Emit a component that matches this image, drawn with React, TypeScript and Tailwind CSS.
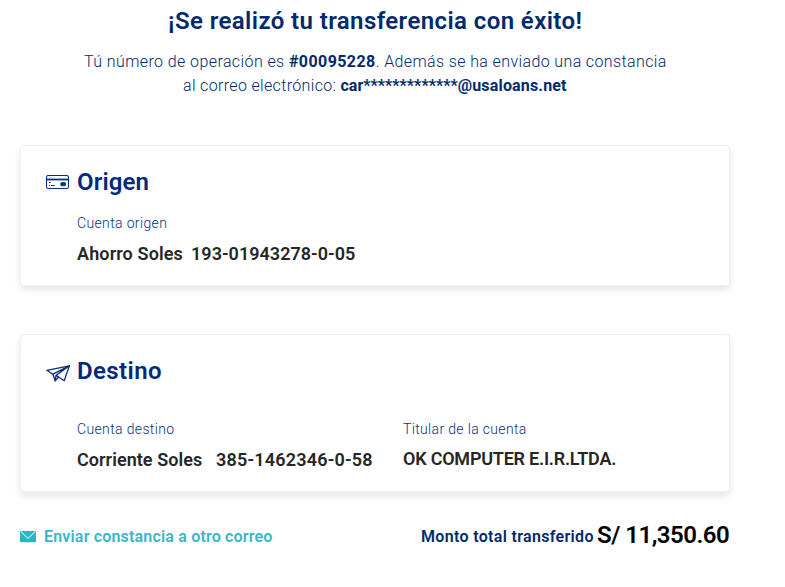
import type { ReactNode } from "react";

function CardIcon() {
  return (
    <svg className="mb-[2px] block" width="24" height="16" viewBox="0 0 24 16" fill="none" stroke="#0b2f7f">
      <rect x="0.5" y="0.5" width="22" height="13" rx="1.8" strokeWidth="1.1" />
      <path d="M0.5 4.5H22.5" strokeWidth="1.8" />
      <path d="M3 7.5H4.4M3 10.5H4M5 10.5H8.6" strokeWidth="1" />
      <rect x="14.8" y="7.6" width="4.8" height="3.2" rx="0.8" fill="#0b2f7f" strokeWidth="0.8" />
    </svg>
  );
}

function PlaneIcon() {
  return (
    <svg className="mt-[2px] block" width="25" height="17" viewBox="0 0 25 17" fill="none" stroke="#0b2f7f" strokeWidth="1.3" strokeLinejoin="round" strokeLinecap="round">
      <path d="M0.8 5.3L23.4 0.8L18.2 15.8L12.6 12L9.2 15.8L6.9 9.2Z" />
      <path d="M23.4 0.8L6.9 9.2M23.4 0.8L10 10.4L9.2 15.6M10 10.4L12.6 12" />
    </svg>
  );
}

function MailIcon() {
  return (
    <svg className="block" width="16" height="12" viewBox="0 0 16 12">
      <rect width="16" height="11.2" rx="1.2" fill="#2bb5c8" />
      <path d="M1 0.8L8 7.4L15 0.8" fill="none" stroke="#fff" strokeWidth="1" />
    </svg>
  );
}

function Panel({ icon, title, className, children }: { icon: ReactNode; title: ReactNode; className: string; children: ReactNode }) {
  return (
    <section className={`rounded-[4px] border border-[#eeeff1] bg-white pl-[25px] pt-5 shadow-[0_4px_7px_rgba(30,40,80,0.11)] ${className}`}>
      <header className="flex h-8 items-center">
        <div className="w-[31px] pt-[3px]">{icon}</div>
        <h2 className="text-[24px] font-semibold leading-8 text-[#002a7a]">{title}</h2>
      </header>
      <div className="pl-[31px]">{children}</div>
    </section>
  );
}

export default function App() {
  return (
    <main
      className="h-[587px] w-[785px] overflow-hidden whitespace-pre bg-white pl-5 pt-[5px] text-[#002a6c]"
      style={{ fontFamily: 'Roboto, "Liberation Sans", sans-serif' }}
    >
      <div className="w-[710px]">
        <h1 className="pl-[148px] text-[24px] font-semibold leading-8 tracking-[0.4px]">¡Se realizó tu transferencia con éxito!</h1>
        <div className="mt-[13px] text-[16px] font-light leading-6">
          <p className="pl-[64px]">
            <span className="tracking-[0.41px]">Tú número de operación es </span>
            <b className="font-bold tracking-[0.42px]">#00095228</b>
            <span className="tracking-[0.38px]">. Además se ha enviado una constancia</span>
          </p>
          <p className="pl-[163px]">
            <span className="tracking-[0.34px]">al correo electrónico: </span>
            <b className="font-bold">car*************<span className="tracking-[0.17px]">@usaloans.net</span></b>
          </p>
        </div>

        <Panel className="mt-[47px] h-[141px]" icon={<CardIcon />} title={<span className="tracking-[0.1px]">Origen</span>}>
          <p className="mt-[15px] text-[14px] font-light leading-5 tracking-[0.36px] text-[#0b2f7f]">Cuenta origen</p>
          <p className="mt-[9px] flex text-[18px] font-semibold leading-6 text-[#262626]">
            <span className="w-[114px] tracking-[0.13px]">Ahorro Soles</span>
            <span className="tracking-[0.03px]">193-01943278-0-05</span>
          </p>
        </Panel>

        <Panel className="mt-12 h-[158px]" icon={<PlaneIcon />} title={<span className="tracking-[0.4px]">Destino</span>}>
          <div className="flex pt-8">
            <div className="w-[326px]">
              <p className="text-[14px] font-light leading-5 tracking-[0.36px] text-[#0b2f7f]">Cuenta destino</p>
              <p className="mt-[9px] flex text-[18px] font-semibold leading-6 text-[#262626]">
                <span className="w-[139px] tracking-[0.06px]">Corriente Soles</span>
                <span className="tracking-[0.2px]">385-1462346-0-58</span>
              </p>
            </div>
            <div>
              <p className="text-[14px] font-light leading-5 tracking-[0.34px] text-[#0b2f7f]">Titular de la cuenta</p>
              <p className="mt-2 text-[18px] font-semibold leading-6 tracking-[-0.22px] text-[#262626]">OK COMPUTER E.I.R.LTDA.</p>
            </div>
          </div>
        </Panel>

        <footer className="mt-[27px] flex items-start justify-between">
          <a className="mt-[2px] flex items-center text-[16px] font-semibold leading-8 tracking-[0.18px] text-[#3ab5cb]">
            <span className="w-6"><MailIcon /></span>
            Enviar constancia a otro correo
          </a>
          <p className="flex items-start leading-8">
            <span className="mt-[2px] w-[176px] text-[16px] font-semibold tracking-[0.33px]">Monto total transferido</span>
            <span className="w-[133px] text-[24px] font-semibold tracking-[-0.5px] text-black">S/ 11,350.60</span>
          </p>
        </footer>
      </div>
    </main>
  );
}
